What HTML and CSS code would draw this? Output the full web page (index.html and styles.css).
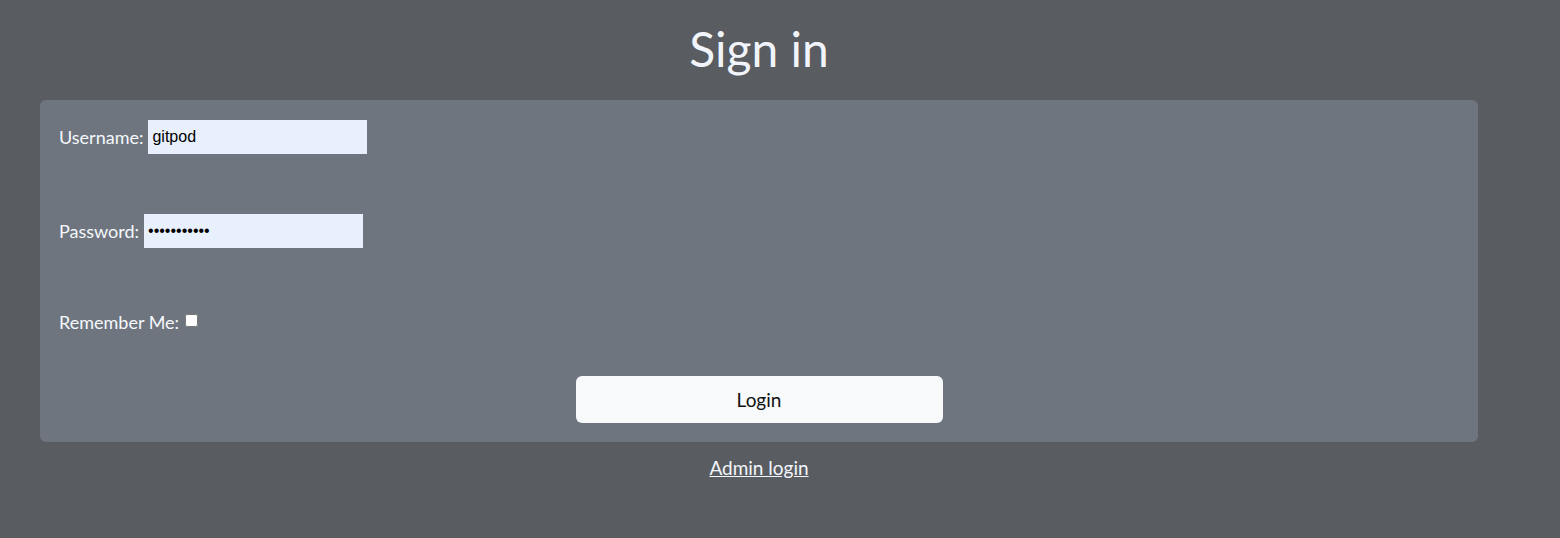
FILE: index.html
```html
<!DOCTYPE html>
<html lang="en">
<head>
<meta charset="utf-8">
<title>Sign in</title>
<link rel="stylesheet" href="styles.css">
</head>
<body>
<div class="container">
  <h1 class="title">Sign in</h1>
  <form class="card">
    <div class="row">
      <label class="label" for="username">Username:</label>
      <input class="field" id="username" type="text" value="gitpod">
    </div>
    <div class="row">
      <label class="label" for="password">Password:</label>
      <input class="field" id="password" type="password" value="gitpodgitpo">
    </div>
    <div class="row row-check">
      <label class="label" for="remember">Remember Me:</label>
      <input class="check" id="remember" type="checkbox">
    </div>
    <div class="actions">
      <button class="btn" type="button">Login</button>
    </div>
  </form>
  <div class="footer">
    <a class="link" href="#">Admin login</a>
  </div>
</div>
</body>
</html>
```

FILE: styles.css
```css
html, body {
  margin: 0;
  padding: 0;
}
body {
  background: #595c61;
  font-family: "Lato", "Open Sans", sans-serif;
  color: #f3f6fb;
  height: 538px;
  overflow: hidden;
}
.container {
  width: 1438px;
  margin-left: 40px;
}
.title {
  margin: 0;
  height: 100px;
  box-sizing: border-box;
  padding-top: 19px;
  text-align: center;
  font-weight: 400;
  font-size: 48px;
  line-height: 60px;
  color: #f1f5fb;
}
.card {
  background: #6e757e;
  border-radius: 6px;
  padding: 20px 19px 19px;
  margin: 0;
}
.row {
  display: flex;
  align-items: center;
  height: 34px;
  margin-bottom: 60px;
}
.row-check {
  height: 28px;
  margin-bottom: 40px;
}
.label {
  font-size: 18px;
  color: #f5f8fc;
  margin-right: 5px;
}
.field {
  width: 219px;
  height: 34px;
  box-sizing: border-box;
  border: none;
  margin: 0;
  padding: 0 4px;
  background: #e8f0fe;
  font-family: "Liberation Sans", Arial, sans-serif;
  font-size: 16px;
  color: #000;
  outline: none;
}
.check {
  width: 13px;
  height: 13px;
  margin: 0 0 4px 1px;
}
.actions {
  display: flex;
  justify-content: center;
}
.btn {
  width: 367px;
  height: 47px;
  border: none;
  border-radius: 6px;
  background: #f8f9fb;
  font-family: "Lato", "Open Sans", sans-serif;
  font-size: 19px;
  color: #111;
  cursor: pointer;
}
.footer {
  text-align: center;
  padding-top: 14px;
}
.link {
  font-size: 19px;
  color: #f3f6fb;
  text-decoration: underline;
}
```
